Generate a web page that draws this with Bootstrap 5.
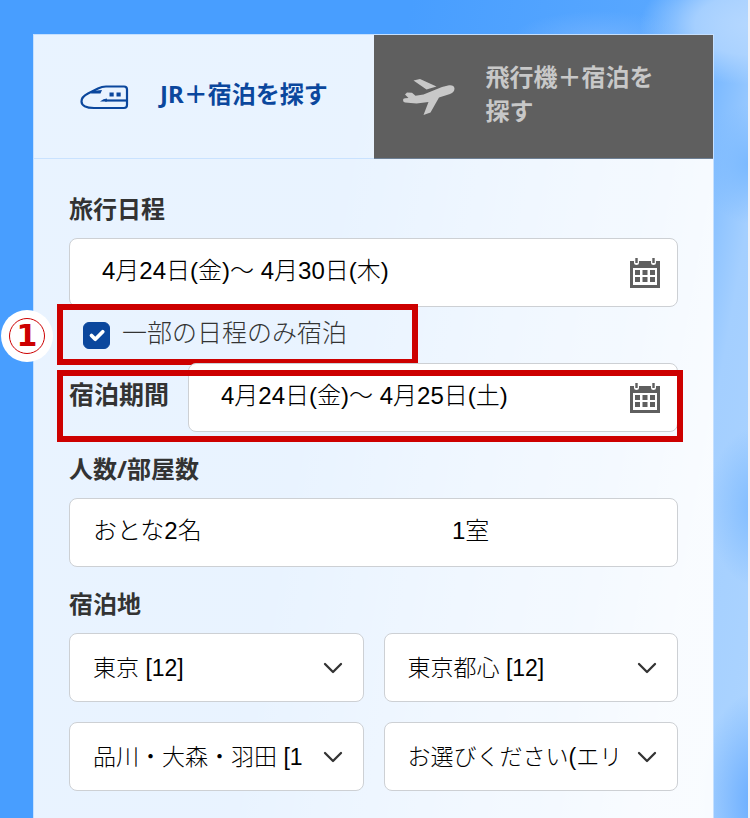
<!DOCTYPE html>
<html lang="ja">
<head>
<meta charset="utf-8">
<meta name="viewport" content="width=device-width, initial-scale=1">
<title>JR＋宿泊を探す</title>
<link href="https://cdn.jsdelivr.net/npm/bootstrap@5.3.0/dist/css/bootstrap.min.css" rel="stylesheet">
<style>
  body {
    font-family: "Liberation Sans", "Noto Sans CJK JP", sans-serif;
    font-size: 24px;
    font-weight: 300;
    line-height: 36px;
    color: #000;
    border-right: 2px solid #eef0f6;
    background:
      radial-gradient(ellipse 50px 60px at 100% 20%, #7ab9ff 0%, transparent 100%),
      radial-gradient(ellipse 50px 80px at 101% 62%, #7fbbff 0%, transparent 100%),
      radial-gradient(ellipse 60px 110px at 101% 98%, #66abff 0%, transparent 100%),
      radial-gradient(ellipse 110px 60px at 100% 3%, #b4d7ff 0%, rgba(180,215,255,.8) 50%, transparent 100%),
      radial-gradient(ellipse 90px 30px at 80% 5%, rgba(130,186,255,.6) 0%, transparent 100%),
      linear-gradient(100deg, #489eff 0%, #489eff 46%, #5aa8ff 76%, #a4cfff 88%, #acd4ff 100%);
  }
  .page { padding: 34px 34px 0 33px; }
  .panel { background: linear-gradient(100deg, rgba(255,255,255,.88) 40%, rgba(255,255,255,.93) 75%); border: 1px solid #c5e0ff; border-bottom: 0; }
  .jp-bold { font-family: "Noto Sans", "Noto Sans CJK JP", sans-serif; font-weight: 700; }
  .mode-tab { height: 124px; width: 50%; border: 0; background: transparent; color: #0b479d; text-align: left; line-height: 34px; border-bottom: 1px solid #c9e2ff; font-size: 24px; }
  .mode-tab.other { background: #5f5f5f; color: #c8c8c8; border-color: #6d7f94; }
  .mode-tab span { padding-bottom: 6px; }
  .tab-jr { padding: 0 30px 0 46px; gap: 30px; }
  .tab-air { padding: 0 56px 0 28px; gap: 30px; }
  .search-form { padding: 33px 35px 16px; }
  .field-title { display: block; color: #333; font-size: 24px; line-height: 34px; padding-bottom: 2px; margin-bottom: 10px; }
  .field-box { height: 69px; background-color: #fff; border: 1px solid #cdd0d4; border-radius: 8px; color: #000; }
  .date-box { padding: 0 17px 0 32px; }
  .date-text { border: 0; outline: 0; background: transparent; min-width: 0; padding: 0 0 4px; color: #000; font-weight: 300; }
  .icon-btn { border: 0; background: transparent; padding: 0; line-height: 0; }
  .partial-row { height: 56px; padding-left: 14px; gap: 12px; }
  .partial-row .form-check-input { width: 27px; height: 27px; margin: 0; border-radius: 6px; }
  .form-check-input:checked { background-color: #0b479d; border-color: #0b479d; }
  .partial-label { color: #333; font-size: 25px; padding-bottom: 4px; }
  .stay-title { color: #333; font-size: 25px; width: 119px; padding-bottom: 8px; }
  .guest-box { padding: 0 23px 4px; font-weight: 300; }
  .guest-box .people { flex: 0 0 359px; }
  .block-gap { margin-top: 20px; }
  .area-grid { --bs-gutter-x: 20px; --bs-gutter-y: 20px; }
  .field-box.form-select {
    font-size: 23px; font-weight: 300; line-height: 36px; padding: 0 60px 0 23px;
    background-image: url("data:image/svg+xml,%3Csvg xmlns='http://www.w3.org/2000/svg' viewBox='0 0 20 20'%3E%3Cpath d='M2 6l8 8 8-8' fill='none' stroke='%23333' stroke-width='2.300' stroke-linecap='round' stroke-linejoin='round'/%3E%3C/svg%3E");
    background-size: 20px 20px; background-position: right 20px center;
  }
  /* call-outs laid over the form */
  .callout-frame { position: absolute; border: 6px solid #cd0000; pointer-events: none; }
  .frame-partial { left: -12px; top: -3px; bottom: -2px; width: 361px; }
  .frame-stay { left: -12px; right: -5px; top: 7px; bottom: -10px; }
  .step-dot { position: absolute; left: -68px; top: 3px; width: 52px; height: 52px; border-radius: 50%; background: #fff; }
  .step-ring { width: 36px; height: 36px; border: 1px solid #cd0000; border-radius: 50%; color: #cd0000; font: 700 30px/34px "DejaVu Sans", sans-serif; }
</style>
</head>
<body class="m-0">
<main class="page min-vh-100 d-flex flex-column">
  <section class="panel flex-grow-1">
    <div class="d-flex" role="tablist">
      <button type="button" role="tab" aria-selected="true" class="mode-tab tab-jr jp-bold d-flex align-items-center">
        <svg class="flex-shrink-0" width="50" height="26" viewBox="0 0 50 26" aria-hidden="true" fill="none" stroke="#0b479d" stroke-width="2.200" stroke-linejoin="round">
          <path d="M26 2.500h18q3 0 3 3v15.500q0 3-3 3H14C6 24 1.500 21.500 1.500 17.500 1.500 14 4 11.500 8 9.500L18 4.500q4-2 8-2z"/>
          <path d="M25 16.500h22"/>
          <path d="M12 7l10-1-1.500 3.500H11zM20 17.600q3.500-3 7-3v3z" fill="#0b479d" stroke="none"/>
          <path d="M29.500 8.500h4.200v4h-4.200zM36.500 8.500h4.200v4h-4.200z" fill="#0b479d" stroke="none"/>
        </svg>
        <span>JR＋宿泊を探す</span>
      </button>
      <button type="button" role="tab" aria-selected="false" class="mode-tab other tab-air jp-bold d-flex align-items-center">
        <svg class="flex-shrink-0" width="54" height="38" viewBox="0 0 54 38" aria-hidden="true" fill="#c8c8c8">
          <path d="M1 22q0-1.800 2-1.800l3.500-.2L3 16.500 5 14.500l5 .3 3.500 3 8-1.300L40 9l6-1.600c3.500-.8 6.500.3 6.500 3.200 0 2.500-1.500 4.400-4.500 5.400L37 19.500 28.500 34.500 21.500 37 26.500 24 14.500 25.500 3 24.500Q1 24 1 22zM11.500 2.500L18 1 34.500 8.500 24.500 11.500z"/>
        </svg>
        <span>飛行機＋宿泊を探す</span>
      </button>
    </div>

    <form class="search-form">
      <label class="field-title jp-bold" for="trip">旅行日程</label>
      <div class="field-box date-box d-flex align-items-center">
        <input id="trip" class="date-text flex-grow-1" type="text" value="4月24日(金)～ 4月30日(木)" readonly>
        <button type="button" class="icon-btn" aria-label="カレンダーを開く">
          <svg width="30" height="30" viewBox="0 0 30 30" fill="#5f5f5f"><path fill-rule="evenodd" d="M0 3h30v27H0zM3 10v17h24V10z"/><path d="M4 0h5v5q0 2-2.500 2T4 5zM21 0h5v5q0 2-2.500 2T21 5z" fill="#fff"/><path d="M5.300 0h2.400v5H5.300zM22.300 0h2.400v5h-2.400zM5 12h5v5H5zM12.500 12h5v5h-5zM20 12h5v5h-5zM5 19h5v5H5zM12.500 19h5v5h-5zM20 19h5v5h-5z"/></svg>
        </button>
      </div>

      <div class="partial-row position-relative d-flex align-items-center">
        <input class="form-check-input" type="checkbox" id="partial" checked>
        <label class="partial-label" for="partial">一部の日程のみ宿泊</label>
        <div class="callout-frame frame-partial"></div>
        <div class="step-dot d-flex align-items-center justify-content-center"><span class="step-ring text-center">1</span></div>
      </div>

      <div class="position-relative d-flex align-items-center">
        <label class="stay-title jp-bold flex-shrink-0" for="stay">宿泊期間</label>
        <div class="field-box date-box d-flex align-items-center flex-grow-1">
          <input id="stay" class="date-text flex-grow-1" type="text" value="4月24日(金)～ 4月25日(土)" readonly>
          <button type="button" class="icon-btn" aria-label="カレンダーを開く">
            <svg width="30" height="30" viewBox="0 0 30 30" fill="#5f5f5f"><path fill-rule="evenodd" d="M0 3h30v27H0zM3 10v17h24V10z"/><path d="M4 0h5v5q0 2-2.500 2T4 5zM21 0h5v5q0 2-2.500 2T21 5z" fill="#fff"/><path d="M5.300 0h2.400v5H5.300zM22.300 0h2.400v5h-2.400zM5 12h5v5H5zM12.500 12h5v5h-5zM20 12h5v5h-5zM5 19h5v5H5zM12.500 19h5v5h-5zM20 19h5v5h-5z"/></svg>
          </button>
        </div>
        <div class="callout-frame frame-stay"></div>
      </div>

      <div class="block-gap">
        <label class="field-title jp-bold" for="guests">人数/部屋数</label>
        <button type="button" id="guests" class="field-box guest-box w-100 d-flex align-items-center text-start">
          <span class="people">おとな2名</span><span>1室</span>
        </button>
      </div>

      <fieldset class="block-gap">
        <legend class="field-title jp-bold float-none">宿泊地</legend>
        <div class="row area-grid">
          <div class="col-6"><select class="form-select field-box" aria-label="都道府県"><option>東京 [12]</option></select></div>
          <div class="col-6"><select class="form-select field-box" aria-label="地域"><option>東京都心 [12]</option></select></div>
          <div class="col-6"><select class="form-select field-box" aria-label="地区"><option>品川・大森・羽田 [12]</option></select></div>
          <div class="col-6"><select class="form-select field-box" aria-label="エリア"><option>お選びください(エリア)</option></select></div>
        </div>
      </fieldset>
    </form>
  </section>
</main>
<script src="https://cdn.jsdelivr.net/npm/bootstrap@5.3.0/dist/js/bootstrap.bundle.min.js"></script>
</body>
</html>
